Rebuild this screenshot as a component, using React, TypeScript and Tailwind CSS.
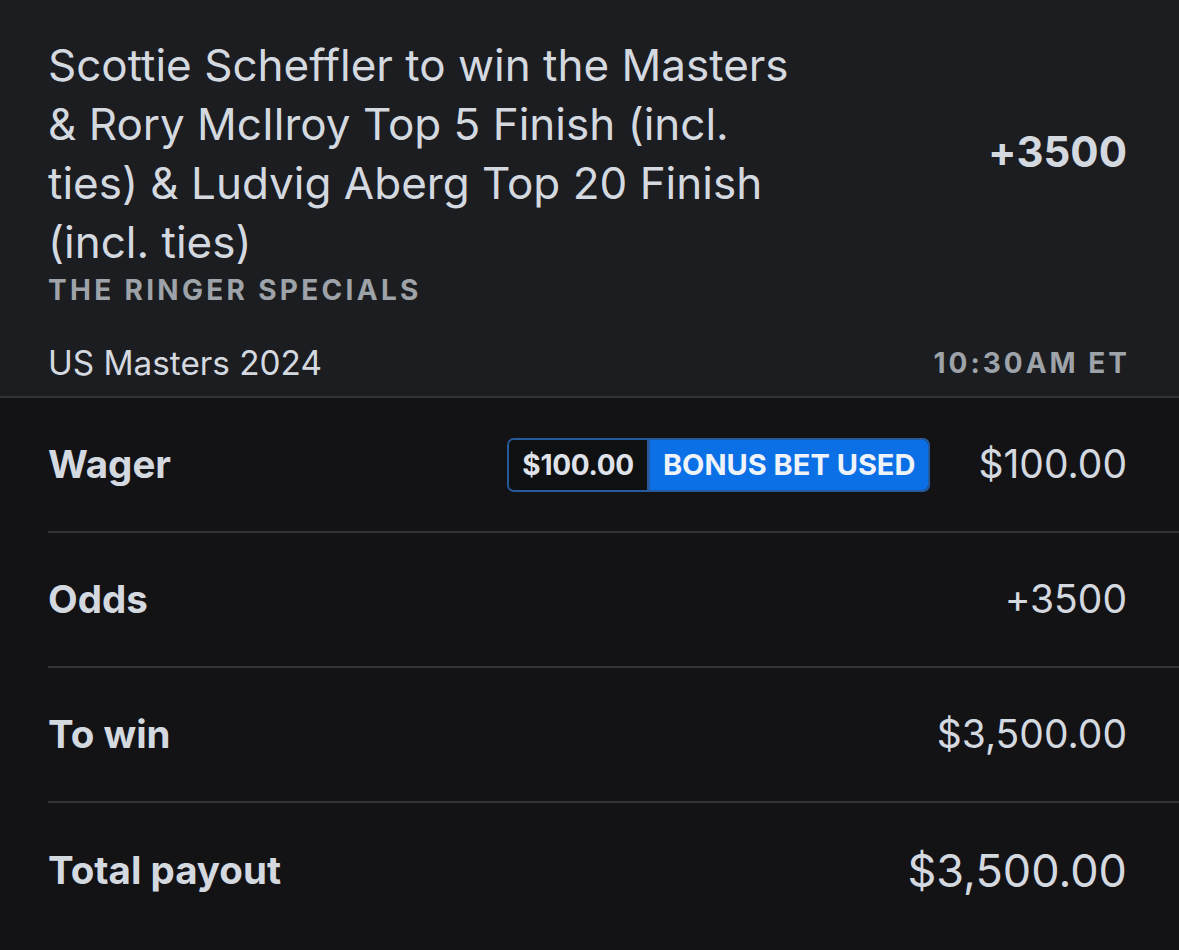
import React from "react";

const rows: { label: string; value: string; badge?: boolean; big?: boolean }[] = [
  { label: "Wager", value: "$100.00", badge: true },
  { label: "Odds", value: "+3500" },
  { label: "To win", value: "$3,500.00" },
  { label: "Total payout", value: "$3,500.00", big: true },
];

function BonusBadge() {
  return (
    <div className="flex h-[54px] items-stretch overflow-hidden rounded-[7px] border-2 border-[#275a9b]">
      <div className="flex items-center bg-[#0f1012] px-[13px] text-[28px] font-bold tracking-[-0.3px] text-[#dfe3e9]">
        $100.00
      </div>
      <div className="w-[3px] bg-[#275a9b]" />
      <div className="flex items-center bg-[#0b70e6] px-[13px] text-[29px] font-bold text-[#eef3fa]">
        BONUS BET USED
      </div>
    </div>
  );
}

export default function App() {
  return (
    <div
      className="h-[950px] w-[1179px] overflow-hidden bg-[#131316] text-[#d4d9e0] [font-variant-ligatures:none]"
      style={{ fontFamily: "Inter, 'Open Sans', sans-serif" }}
    >
      {/* market header */}
      <div className="border-b-2 border-[#323336] bg-[#1c1d20] pl-12 pr-[52px] pt-[36px]">
        <div className="flex items-center justify-between">
          <div className="text-[44px] leading-[59px]">
            Scottie Scheffler to win the Masters
            <br />& Rory McIlroy Top 5 Finish (incl.
            <br />
            ties) &amp; Ludvig Aberg Top 20 Finish
            <br />
            (incl. ties)
          </div>
          <div className="mb-[6px] text-[42px] font-bold">+3500</div>
        </div>
        <div className="text-[28px] font-bold leading-[36px] tracking-[3.3px] text-[#9ea3a9]">
          THE RINGER SPECIALS
        </div>
        <div className="mt-[34px] flex items-center justify-between pb-[12px]">
          <div className="text-[33.3px] leading-[38px]">US Masters 2024</div>
          <div className="-mr-[3px] text-[28px] font-bold tracking-[3px] text-[#9ea3a9]">10:30AM ET</div>
        </div>
      </div>

      {/* wager details */}
      <div className="pl-12">
        {rows.map((r, i) => (
          <div
            key={r.label}
            className={`flex h-[135px] items-center justify-between pr-[52px] ${
              i < rows.length - 1 ? "border-b-2 border-[#323336]" : ""
            }`}
          >
            <div className="text-[38.5px] font-bold">{r.label}</div>
            <div className="flex items-center gap-[48px]">
              {r.badge && <BonusBadge />}
              <div className={r.big ? "text-[45px]" : "text-[39px]"}>{r.value}</div>
            </div>
          </div>
        ))}
      </div>
    </div>
  );
}
